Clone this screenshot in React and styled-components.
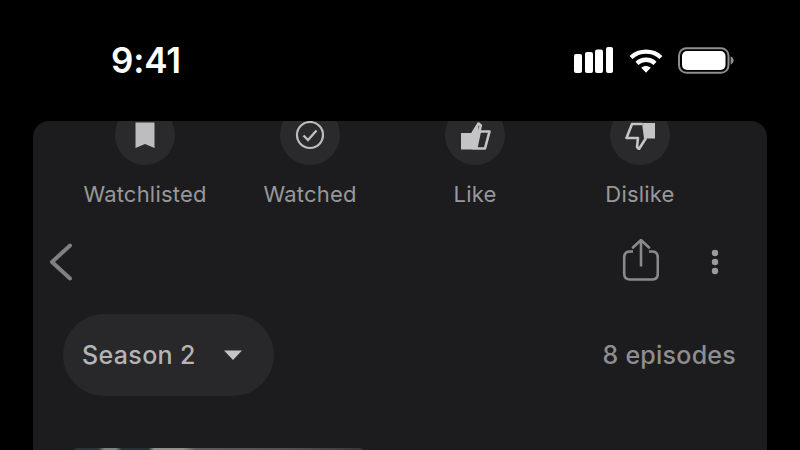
import styled, { createGlobalStyle } from "styled-components";

const GlobalStyle = createGlobalStyle`
  html, body {
    margin: 0;
    padding: 0;
    background: #000;
    overflow: hidden;
  }
  body {
    font-family: "Inter", "Liberation Sans", sans-serif;
  }
`;

const Screen = styled.div`
  width: 800px;
  height: 450px;
  background: #000;
  overflow: hidden;
`;

const StatusBar = styled.div`
  height: 121px;
  box-sizing: border-box;
  padding: 38px 66px 0 111px;
  display: flex;
  justify-content: space-between;
  align-items: flex-start;
`;

const Time = styled.div`
  color: #fff;
  font-size: 35px;
  line-height: 44px;
  font-weight: 600;
  letter-spacing: -0.2px;
`;

const StatusIcons = styled.div`
  display: flex;
  align-items: center;
  gap: 15px;
  height: 44px;
`;

const Panel = styled.div`
  margin: 0 33px;
  height: 329px;
  background: #1c1c1e;
  border-radius: 16px 16px 0 0;
  overflow: hidden;
`;

const Actions = styled.div`
  display: grid;
  grid-template-columns: repeat(4, 165px);
  padding-left: 29.5px;
  margin-top: -16px;
`;

const Action = styled.div`
  display: flex;
  flex-direction: column;
  align-items: center;
  gap: 15px;
`;

const ActionCircle = styled.div`
  width: 60px;
  height: 60px;
  border-radius: 50%;
  background: #2a2a2c;
  display: flex;
  align-items: center;
  justify-content: center;
`;

const ActionLabel = styled.div`
  color: #98989a;
  font-size: 22px;
  line-height: 28px;
  letter-spacing: 0.2px;
  white-space: nowrap;
`;

const NavRow = styled.div`
  display: flex;
  align-items: center;
  justify-content: space-between;
  height: 50px;
  margin-top: 29px;
  padding: 0 48px 0 15px;
`;

const NavRight = styled.div`
  display: flex;
  align-items: center;
  gap: 52px;
`;

const SeasonRow = styled.div`
  display: flex;
  align-items: center;
  justify-content: space-between;
  margin-top: 27px;
  padding: 0 31px 0 30px;
`;

const SeasonButton = styled.div`
  width: 211px;
  height: 82px;
  box-sizing: border-box;
  padding: 0 31px 0 19px;
  border-radius: 41px;
  background: #28282a;
  display: flex;
  align-items: center;
  justify-content: space-between;
`;

const SeasonLabel = styled.span`
  color: #b4b4b6;
  font-size: 25px;
  font-weight: 500;
  letter-spacing: 0.35px;
`;

const EpisodeCount = styled.span`
  color: #8e8e90;
  font-size: 25px;
  font-weight: 500;
  letter-spacing: 0.25px;
`;

const Thumb = styled.div`
  width: 293px;
  height: 60px;
  margin: 52px 0 0 39px;
  border-radius: 6px 6px 0 0;
  background: linear-gradient(
    90deg,
    #24343a 0%,
    #27363b 9%,
    #7c8280 11%,
    #7c8280 15%,
    #1e3238 17%,
    #1e3238 26%,
    #8e908e 28%,
    #8e908e 38%,
    #5a5c5e 42%,
    #505252 75%,
    #343638 100%
  );
`;

const SignalIcon = () => (
  <svg width="40" height="26" viewBox="0 0 40 26">
    <g fill="#fff">
      <rect x="0" y="7" width="8" height="19" rx="2" />
      <rect x="11" y="5" width="8" height="21" rx="2" />
      <rect x="21" y="2.5" width="8" height="23.5" rx="2" />
      <rect x="32" y="0" width="7" height="26" rx="2" />
    </g>
  </svg>
);

const WifiIcon = () => (
  <svg width="34" height="25" viewBox="0 0 36 26">
    <g fill="none" stroke="#fff" strokeWidth="4.6">
      <path d="M2.2 9.8C11 1.6 25 1.6 33.8 9.8" />
      <path d="M8.4 16C13.8 11 22.2 11 27.6 16" />
    </g>
    <path d="M13 20.6C15.8 18.2 20.2 18.2 23 20.6L18 26Z" fill="#fff" />
  </svg>
);

const BatteryIcon = () => (
  <svg width="56" height="27" viewBox="0 0 56 27">
    <rect x="1" y="1.2" width="49.5" height="24.6" rx="7.5" fill="none" stroke="#8f8f8f" strokeWidth="2" />
    <rect x="4" y="4" width="43.5" height="19" rx="5" fill="#fff" />
    <path d="M52.6 9.6C54.6 10.2 55.6 11.8 55.6 13.5C55.6 15.2 54.6 16.8 52.6 17.4Z" fill="#8f8f8f" />
  </svg>
);

const BookmarkIcon = () => (
  <svg width="22" height="28" viewBox="0 0 22 28">
    <path d="M1.5 1.5H20.5V27L11 23L1.5 27Z" fill="#bdbdbf" />
  </svg>
);

const CheckIcon = () => (
  <svg width="30" height="30" viewBox="0 0 30 30" fill="none" stroke="#bdbdbf">
    <circle cx="15" cy="15" r="13" strokeWidth="2.2" />
    <path d="M8.5 15.5L13 20L21.5 10.5" strokeWidth="2.4" />
  </svg>
);

const ThumbUpIcon = () => (
  <svg width="32" height="30" viewBox="0 0 32 30">
    <path d="M2 13H13V29.5H2Z" fill="#c4c4c6" />
    <path
      d="M14 12.5L19.5 3.5L21.8 5.5L20.4 11.5H30.5L26 28.5H14Z"
      fill="none"
      stroke="#c4c4c6"
      strokeWidth="2.6"
      strokeLinejoin="round"
    />
    <path d="M12 13.5L19 4L20 12H22L18.5 28.5H12Z" fill="#c4c4c6" />
  </svg>
);

const ThumbDownIcon = () => (
  <svg width="32" height="30" viewBox="0 0 32 30">
    <path d="M18 3H31V18.5H20Z" fill="#c4c4c6" />
    <path
      d="M18 4H8L2.5 18H14L13 27L15 29L22 18"
      fill="none"
      stroke="#c4c4c6"
      strokeWidth="2.6"
      strokeLinejoin="round"
    />
  </svg>
);

const ChevronIcon = () => (
  <svg width="26" height="38" viewBox="0 0 26 38">
    <path d="M22 2.5L4 19L22 35.5" fill="none" stroke="#808082" strokeWidth="4" strokeLinecap="round" strokeLinejoin="round" />
  </svg>
);

const ShareIcon = () => (
  <svg width="38" height="46" viewBox="0 2.5 38 46" fill="none" stroke="#8a8a8c" strokeWidth="2.6">
    <path d="M12 15H9C5 15 3.2 17 3.2 21V37C3.2 41 5 43 9 43H31C35 43 36.8 41 36.8 37V21C36.8 17 35 15 31 15H28" />
    <path d="M20 30V4" />
    <path d="M12 11L20 3.5L28 11" strokeLinecap="round" />
  </svg>
);

const DotsIcon = () => (
  <svg width="8" height="26" viewBox="0 0 8 26">
    <g fill="#9a9a9c">
      <circle cx="4" cy="4" r="3.2" />
      <circle cx="4" cy="13" r="3.2" />
      <circle cx="4" cy="22" r="3.2" />
    </g>
  </svg>
);

const CaretIcon = () => (
  <svg width="20" height="12" viewBox="0 0 20 12">
    <path d="M1 1.5H19L10 11Z" fill="#c4c4c6" />
  </svg>
);

const actions = [
  { label: "Watchlisted", icon: <BookmarkIcon /> },
  { label: "Watched", icon: <CheckIcon /> },
  { label: "Like", icon: <ThumbUpIcon /> },
  { label: "Dislike", icon: <ThumbDownIcon /> },
];

export default function App() {
  return (
    <Screen>
      <GlobalStyle />
      <StatusBar>
        <Time>9:41</Time>
        <StatusIcons>
          <SignalIcon />
          <WifiIcon />
          <BatteryIcon />
        </StatusIcons>
      </StatusBar>
      <Panel>
        <Actions>
          {actions.map((action) => (
            <Action key={action.label}>
              <ActionCircle>{action.icon}</ActionCircle>
              <ActionLabel>{action.label}</ActionLabel>
            </Action>
          ))}
        </Actions>
        <NavRow>
          <ChevronIcon />
          <NavRight>
            <ShareIcon />
            <DotsIcon />
          </NavRight>
        </NavRow>
        <SeasonRow>
          <SeasonButton>
            <SeasonLabel>Season 2</SeasonLabel>
            <CaretIcon />
          </SeasonButton>
          <EpisodeCount>8 episodes</EpisodeCount>
        </SeasonRow>
        <Thumb />
      </Panel>
    </Screen>
  );
}
